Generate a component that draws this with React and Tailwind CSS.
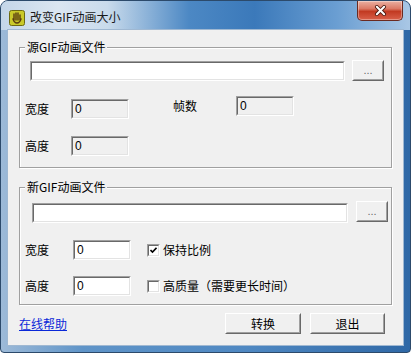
import React from 'react'

const font = "font-['Noto_Sans_CJK_SC','Microsoft_YaHei',sans-serif]"

function AppIcon() {
  return (
    <svg viewBox="0 0 16 16" className="h-[16px] w-[16px]">
      <rect x="0.5" y="0.5" width="15" height="15" rx="2" fill="#c9c92a" stroke="#6d6a12" />
      <path d="M5 4v6M7 3v7M9 3v7M11 5v5M4 9c1 3 2 4 4 4s3-1 4-4" fill="none" stroke="#5a3d10" strokeWidth="1.4" strokeLinecap="round" />
    </svg>
  )
}

function CloseButton() {
  return (
    <div className="ml-auto mr-[7px] flex h-[20px] w-[46px] items-center justify-center rounded-b-[5px] border border-t-0 border-[#6b2a20] bg-[linear-gradient(180deg,#eab0a2_0%,#dc7a66_40%,#c23a22_55%,#d9604a_100%)] shadow-[inset_0_0_0_1px_rgba(255,255,255,0.35)]">
      <svg viewBox="0 0 14 12" className="h-[11px] w-[13px]">
        <path d="M3 2l8 8M11 2l-8 8" stroke="#4a1a12" strokeWidth="4" strokeLinecap="round" />
        <path d="M3 2l8 8M11 2l-8 8" stroke="#ffffff" strokeWidth="2.2" strokeLinecap="round" />
      </svg>
    </div>
  )
}

function Edit({ value, className, readOnly }) {
  return (
    <div
      className={`h-[20px] border border-t-[#a0a0a0] border-l-[#a0a0a0] border-r-white border-b-white ${readOnly ? 'bg-[#f0f0f0]' : 'bg-white'} ${className}`}
    >
      <div className="flex h-full w-full items-center border border-t-[#696969] border-l-[#696969] border-r-[#e3e3e3] border-b-[#e3e3e3] pl-[2px] font-['Liberation_Sans',sans-serif] text-[12px] leading-none text-black">
        {value}
      </div>
    </div>
  )
}

function Button({ children, className }) {
  return (
    <div
      className={`border border-t-white border-l-white border-r-[#696969] border-b-[#696969] bg-[#f0f0f0] ${className}`}
    >
      <div className="flex h-full w-full items-center justify-center border border-t-[#f0f0f0] border-l-[#f0f0f0] border-r-[#a0a0a0] border-b-[#a0a0a0] text-[12px] leading-none text-black">
        {children}
      </div>
    </div>
  )
}

function Check({ checked }) {
  return (
    <div className="h-[13px] w-[13px] border border-t-[#a0a0a0] border-l-[#a0a0a0] border-r-white border-b-white bg-white">
      <div className="flex h-full w-full items-center justify-center border border-t-[#696969] border-l-[#696969] border-r-[#e3e3e3] border-b-[#e3e3e3]">
        {checked && (
          <svg viewBox="0 0 7 7" className="h-[7px] w-[7px]">
            <path d="M0.5 3l2 2 4-4.2" fill="none" stroke="#000" strokeWidth="1.6" />
          </svg>
        )}
      </div>
    </div>
  )
}

function Group({ title, className, children }) {
  return (
    <div
      className={`ml-[11px] flex w-[373px] flex-col border border-[#a0a0a0] shadow-[inset_1px_1px_0_#fff,1px_1px_0_#fff] ${className}`}
    >
      <div className="-mt-[9px] ml-[5px] self-start bg-[#f0f0f0] px-[2px] text-[12px] leading-[16px] text-black">
        {title}
      </div>
      {children}
    </div>
  )
}

export default function App() {
  return (
    <div className={`h-[353px] w-[411px] bg-white ${font}`}>
      <div className="flex h-full flex-col rounded-t-[8px] rounded-b-[4px] border border-[#2c4a6b] bg-[linear-gradient(90deg,#9dbad8_0%,#5f94c8_20%,#4f88c2_60%,#2f68a6_100%)]">
        <div className="flex h-[29px] items-start rounded-t-[7px] bg-[linear-gradient(90deg,#c4d6e9_0%,#dbe6f1_14%,#c9dbec_26%,#4c88c4_46%,#3b79ba_62%,#6a9ed2_82%,#a9c7e5_100%)]">
          <div className="ml-[8px] mt-[9px]">
            <AppIcon />
          </div>
          <div className="ml-[5px] mt-[8px] text-[12px] leading-[16px] text-[#1a1a1a]">改变GIF动画大小</div>
          <CloseButton />
        </div>

        <div className="mx-[7px] mb-[7px] flex flex-1 flex-col bg-[#f0f0f0] shadow-[0_0_0_1px_#9fb8d2]">
          <Group title="源GIF动画文件" className="mt-[17px] h-[121px]">
            <div className="mt-[5px] flex items-center">
              <Edit value="" className="ml-[10px] w-[315px]" />
              <Button className="ml-[7px] h-[21px] w-[32px]">
                <span className="font-['Liberation_Sans',sans-serif] text-[11px] text-[#6b6b6b]">...</span>
              </Button>
            </div>
            <div className="mt-[15px] flex items-start text-[12px] leading-[16px] text-black">
              <div className="ml-[5px] mt-[5px] w-[46px]">宽度</div>
              <Edit value="0" readOnly className="mt-[3px] w-[58px]" />
              <div className="ml-[44px] mt-[2px] w-[24px]">帧数</div>
              <Edit value="0" readOnly className="ml-[39px] w-[58px]" />
            </div>
            <div className="mt-[17px] flex items-center text-[12px] leading-[16px] text-black">
              <div className="ml-[5px] w-[46px]">高度</div>
              <Edit value="0" readOnly className="w-[58px]" />
            </div>
          </Group>

          <Group title="新GIF动画文件" className="mt-[19px] h-[118px]">
            <div className="mt-[8px] flex items-start">
              <Edit value="" className="ml-[12px] w-[316px]" />
              <Button className="-mt-[2px] ml-[8px] h-[21px] w-[32px]">
                <span className="font-['Liberation_Sans',sans-serif] text-[11px] text-[#6b6b6b]">...</span>
              </Button>
            </div>
            <div className="mt-[17px] flex items-center text-[12px] leading-[16px] text-black">
              <div className="ml-[5px] w-[48px]">宽度</div>
              <Edit value="0" className="w-[58px]" />
              <div className="ml-[16px]">
                <Check checked />
              </div>
              <div className="ml-[3px]">保持比例</div>
            </div>
            <div className="mt-[16px] flex items-center text-[12px] leading-[16px] text-black">
              <div className="ml-[5px] w-[48px]">高度</div>
              <Edit value="0" className="w-[58px]" />
              <div className="ml-[16px]">
                <Check />
              </div>
              <div className="ml-[3px]">高质量（需要更长时间）</div>
            </div>
          </Group>

          <div className="mt-[8px] flex items-center">
            <a href="#" className="ml-[11px] text-[12px] leading-[16px] text-[#0a28d8] underline">
              在线帮助
            </a>
            <Button className="ml-auto h-[21px] w-[76px]">转换</Button>
            <Button className="ml-[9px] mr-[18px] h-[21px] w-[75px]">退出</Button>
          </div>
        </div>
      </div>
    </div>
  )
}
